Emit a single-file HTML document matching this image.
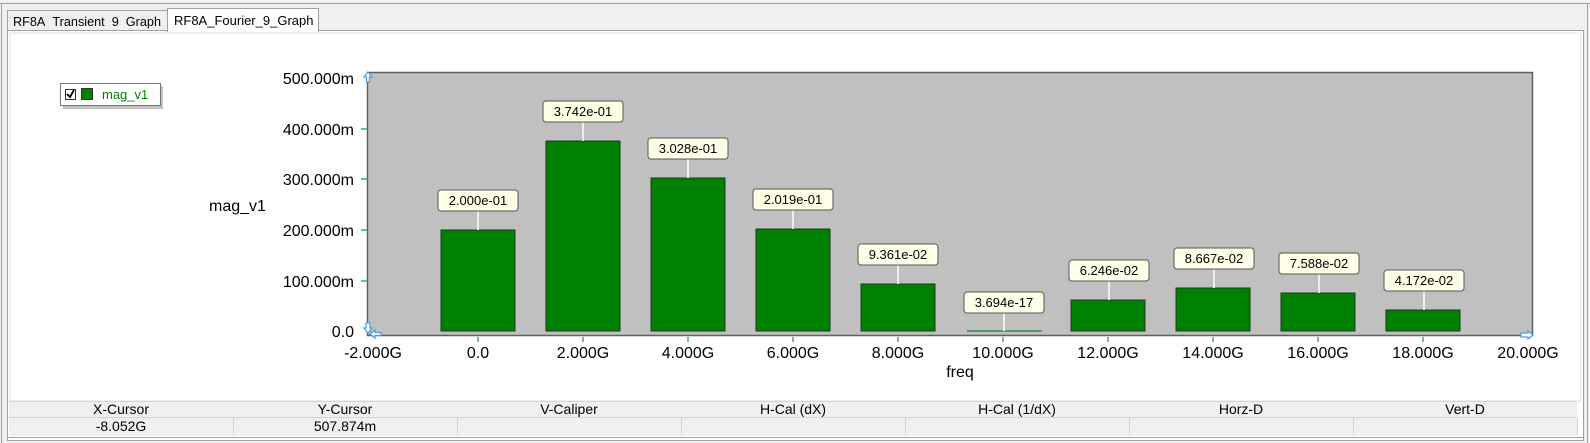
<!DOCTYPE html>
<html><head><meta charset="utf-8"><style>
html,body{margin:0;padding:0;width:1590px;height:443px;overflow:hidden;background:#f0f0f0;font-family:"Liberation Sans",Arial,sans-serif}
</style></head><body>
<svg width="1590" height="443" viewBox="0 0 1590 443" xmlns="http://www.w3.org/2000/svg" font-family="Liberation Sans, Arial, sans-serif">
<rect x="0" y="0" width="1590" height="443" fill="#f0f0f0"/>
<line x1="0" y1="3.5" x2="1590" y2="3.5" stroke="#a0a0a0"/>
<line x1="1.5" y1="3" x2="1.5" y2="443" stroke="#a0a0a0"/>
<line x1="1587.5" y1="3" x2="1587.5" y2="443" stroke="#a0a0a0"/>
<rect x="7.5" y="30.5" width="1576" height="410" fill="#fff" stroke="#a0a0a0"/>
<rect x="10" y="33" width="1571" height="368" fill="#fff" stroke="#e0e0e0"/>
<rect x="7.5" y="10.5" width="160" height="20" fill="#f0f0f0" stroke="#a0a0a0"/>
<text x="13" y="26" font-size="13" fill="#000" textLength="148" lengthAdjust="spacingAndGlyphs">RF8A&#160;&#160;Transient&#160;&#160;9&#160;&#160;Graph</text>
<rect x="167.5" y="8.5" width="151" height="23" fill="#fff" stroke="#a0a0a0"/>
<line x1="168" y1="31" x2="318" y2="31" stroke="#fff" stroke-width="2"/>
<text x="174" y="25" font-size="13" fill="#000">RF8A_Fourier_9_Graph</text>
<rect x="63" y="86" width="100" height="23" fill="#888" opacity="0.5"/>
<rect x="60.5" y="83.5" width="100" height="22" fill="#fff" stroke="#777"/>
<rect x="65.5" y="89.5" width="10" height="10" fill="#fff" stroke="#333"/>
<path d="M67 94 L70 97 L74 90" stroke="#000" stroke-width="1.8" fill="none"/>
<rect x="81.5" y="88.5" width="11" height="11" fill="#008000" stroke="#333"/>
<text x="102" y="99" font-size="13" fill="#008000">mag_v1</text>
<rect x="367.5" y="72.5" width="1165" height="263" fill="#c0c0c0" stroke="#606060" stroke-width="1.5"/>
<g font-size="16" fill="#000" text-anchor="end">
<text x="354" y="84">500.000m</text>
<text x="354" y="135">400.000m</text>
<text x="354" y="185">300.000m</text>
<text x="354" y="236">200.000m</text>
<text x="354" y="287">100.000m</text>
<text x="354" y="337">0.0</text>
</g>
<g stroke="#6ab8b8" stroke-width="2">
<line x1="361" y1="129" x2="367" y2="129"/><line x1="361" y1="179" x2="367" y2="179"/>
<line x1="361" y1="230" x2="367" y2="230"/><line x1="361" y1="281" x2="367" y2="281"/>
</g>
<text x="209" y="211" font-size="16" fill="#000">mag_v1</text>
<g font-size="16" fill="#000" text-anchor="middle">
<text x="373" y="358">-2.000G</text>
<text x="478" y="358">0.0</text>
<text x="583" y="358">2.000G</text>
<text x="688" y="358">4.000G</text>
<text x="793" y="358">6.000G</text>
<text x="898" y="358">8.000G</text>
<text x="1003" y="358">10.000G</text>
<text x="1108" y="358">12.000G</text>
<text x="1213" y="358">14.000G</text>
<text x="1318" y="358">16.000G</text>
<text x="1423" y="358">18.000G</text>
<text x="1528" y="358">20.000G</text>
<text x="960" y="377">freq</text>
</g>
<g stroke="#6ab8b8" stroke-width="2">
<line x1="478" y1="337" x2="478" y2="342"/><line x1="583" y1="337" x2="583" y2="342"/>
<line x1="688" y1="337" x2="688" y2="342"/><line x1="793" y1="337" x2="793" y2="342"/>
<line x1="898" y1="337" x2="898" y2="342"/><line x1="1003" y1="337" x2="1003" y2="342"/>
<line x1="1108" y1="337" x2="1108" y2="342"/><line x1="1213" y1="337" x2="1213" y2="342"/>
<line x1="1318" y1="337" x2="1318" y2="342"/><line x1="1423" y1="337" x2="1423" y2="342"/>
</g>
<g fill="#008000" stroke="#1a3a1a" stroke-width="1">
<rect x="441" y="230" width="74" height="101"/>
<rect x="546" y="141" width="74" height="190"/>
<rect x="651" y="178" width="74" height="153"/>
<rect x="756" y="229" width="74" height="102"/>
<rect x="861" y="284" width="74" height="47"/>
<rect x="1071" y="300" width="74" height="31"/>
<rect x="1176" y="288" width="74" height="43"/>
<rect x="1281" y="293" width="74" height="38"/>
<rect x="1386" y="310" width="74" height="21"/>
</g>
<line x1="967" y1="331" x2="1042" y2="331" stroke="#5a9a6a" stroke-width="2"/>
<g font-size="13" fill="#000" text-anchor="middle">
<g><line x1="478" y1="211" x2="478" y2="230" stroke="#eee" stroke-width="2"/><rect x="438" y="190" width="80" height="21" rx="3" fill="#ffffe8" stroke="#555"/><text x="478" y="205">2.000e-01</text></g>
<g><line x1="583" y1="122" x2="583" y2="141" stroke="#eee" stroke-width="2"/><rect x="543" y="101" width="80" height="21" rx="3" fill="#ffffe8" stroke="#555"/><text x="583" y="116">3.742e-01</text></g>
<g><line x1="688" y1="159" x2="688" y2="178" stroke="#eee" stroke-width="2"/><rect x="648" y="138" width="80" height="21" rx="3" fill="#ffffe8" stroke="#555"/><text x="688" y="153">3.028e-01</text></g>
<g><line x1="793" y1="210" x2="793" y2="229" stroke="#eee" stroke-width="2"/><rect x="753" y="189" width="80" height="21" rx="3" fill="#ffffe8" stroke="#555"/><text x="793" y="204">2.019e-01</text></g>
<g><line x1="898" y1="265" x2="898" y2="284" stroke="#eee" stroke-width="2"/><rect x="858" y="244" width="80" height="21" rx="3" fill="#ffffe8" stroke="#555"/><text x="898" y="259">9.361e-02</text></g>
<g><line x1="1004" y1="312" x2="1004" y2="331" stroke="#eee" stroke-width="2"/><rect x="964" y="292" width="80" height="21" rx="3" fill="#ffffe8" stroke="#555"/><text x="1004" y="307">3.694e-17</text></g>
<g><line x1="1109" y1="281" x2="1109" y2="300" stroke="#eee" stroke-width="2"/><rect x="1069" y="260" width="80" height="21" rx="3" fill="#ffffe8" stroke="#555"/><text x="1109" y="275">6.246e-02</text></g>
<g><line x1="1214" y1="269" x2="1214" y2="288" stroke="#eee" stroke-width="2"/><rect x="1174" y="248" width="80" height="21" rx="3" fill="#ffffe8" stroke="#555"/><text x="1214" y="263">8.667e-02</text></g>
<g><line x1="1319" y1="274" x2="1319" y2="293" stroke="#eee" stroke-width="2"/><rect x="1279" y="253" width="80" height="21" rx="3" fill="#ffffe8" stroke="#555"/><text x="1319" y="268">7.588e-02</text></g>
<g><line x1="1424" y1="291" x2="1424" y2="310" stroke="#eee" stroke-width="2"/><rect x="1384" y="270" width="80" height="21" rx="3" fill="#ffffe8" stroke="#555"/><text x="1424" y="285">4.172e-02</text></g>
</g>
<g fill="#fff" stroke="#4aa0e8" stroke-width="1.3">
<path d="M368 72 L364 77 L366.5 77 L366.5 82 L369.5 82 L369.5 77 L372 77 Z"/>
<path d="M366 323 L366 328 L364 328 L368 333 L372 328 L370 328 L370 323 Z"/>
<path d="M370 334 L375 330 L375 332.5 L381 332.5 L381 335.5 L375 335.5 L375 338 Z"/>
<path d="M1533 335 L1528 331 L1528 333 L1521 333 L1521 337 L1528 337 L1528 339 Z"/>
</g>
<rect x="9" y="401" width="1568" height="35" fill="#f0f0f0"/>
<line x1="9" y1="401.5" x2="1577" y2="401.5" stroke="#d5d5d5"/>
<line x1="9" y1="417.5" x2="1577" y2="417.5" stroke="#d5d5d5"/>
<g stroke="#d5d5d5">
<line x1="233.5" y1="418" x2="233.5" y2="435"/><line x1="457.5" y1="418" x2="457.5" y2="435"/>
<line x1="681.5" y1="418" x2="681.5" y2="435"/><line x1="905.5" y1="418" x2="905.5" y2="435"/>
<line x1="1129.5" y1="418" x2="1129.5" y2="435"/><line x1="1353.5" y1="418" x2="1353.5" y2="435"/>
<line x1="1577.5" y1="418" x2="1577.5" y2="435"/>
</g>
<line x1="7" y1="437.5" x2="1584" y2="437.5" stroke="#a0a0a0"/>
<line x1="7" y1="440.5" x2="1584" y2="440.5" stroke="#a0a0a0"/>
<g font-size="14" fill="#000" text-anchor="middle">
<text x="121" y="414">X-Cursor</text><text x="345" y="414">Y-Cursor</text>
<text x="569" y="414">V-Caliper</text><text x="793" y="414">H-Cal (dX)</text>
<text x="1017" y="414">H-Cal (1/dX)</text><text x="1241" y="414">Horz-D</text>
<text x="1465" y="414">Vert-D</text>
<text x="121" y="431">-8.052G</text><text x="345" y="431">507.874m</text>
</g>
</svg>
</body></html>
